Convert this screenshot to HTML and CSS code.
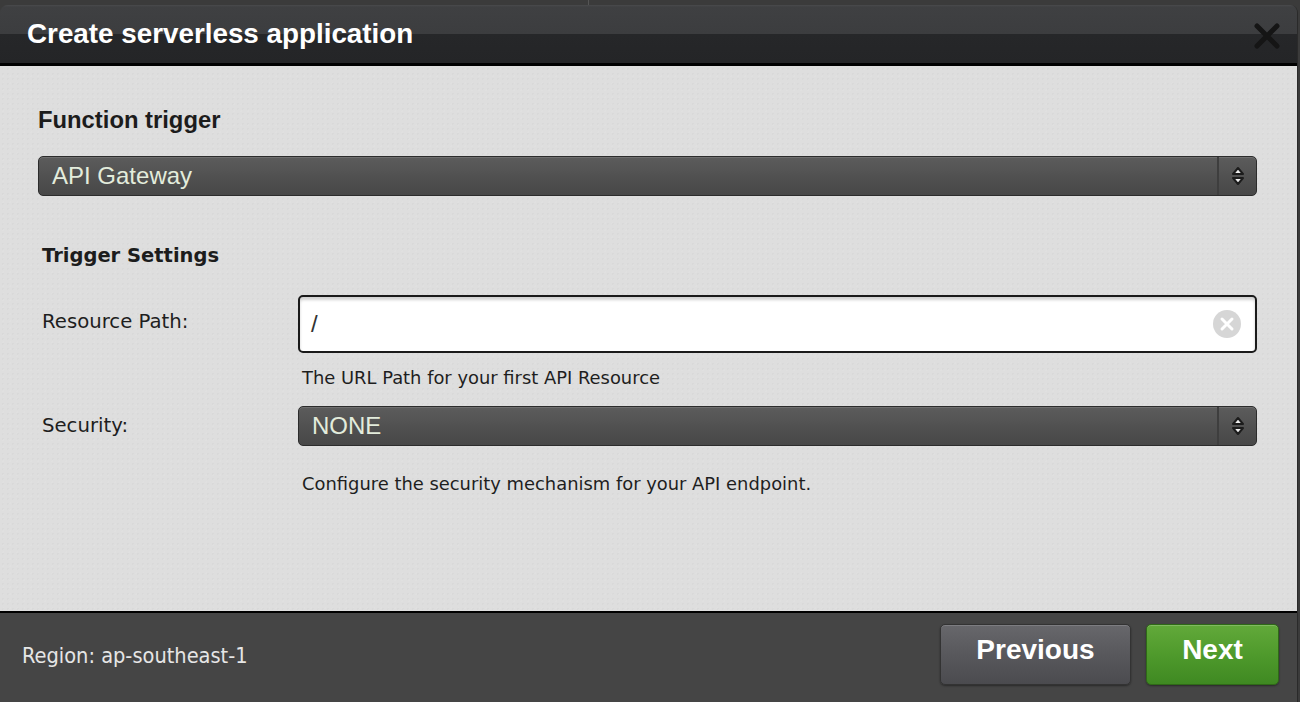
FILE: index.html
```html
<!DOCTYPE html>
<html>
<head>
<meta charset="utf-8">
<link rel="stylesheet" href="styles.css">
</head>
<body>
<div class="backdrop">
  <div class="modal">
    <div class="modal-header">
      <h1 class="modal-title">Create serverless application</h1>
      <button class="close-btn" aria-label="Close">
        <svg width="28" height="28" viewBox="0 0 28 28"><path d="M4 4 L24 24 M24 4 L4 24" stroke="#151515" stroke-width="5" stroke-linecap="round"/></svg>
      </button>
    </div>
    <div class="modal-body">
      <h2 class="section-title">Function trigger</h2>
      <div class="select select-full">
        <span class="select-value">API Gateway</span>
        <span class="select-arrows">
          <svg width="14" height="24" viewBox="0 0 14 24"><path d="M2 10 L7 4 L12 10 Z" fill="#eee" stroke="#1c1c1c" stroke-width="2" stroke-linejoin="round"/><path d="M2 14 L7 20 L12 14 Z" fill="#eee" stroke="#1c1c1c" stroke-width="2" stroke-linejoin="round"/></svg>
        </span>
      </div>
      <h3 class="settings-title">Trigger Settings</h3>
      <div class="form-grid">
        <label class="field-label label-path">Resource Path:</label>
        <div class="field">
          <div class="text-input">
            <span class="input-value">/</span>
            <span class="clear-icon">
              <svg width="28" height="28" viewBox="0 0 28 28"><circle cx="14" cy="14" r="14" fill="#d6d6d6"/><path d="M9 9 L19 19 M19 9 L9 19" stroke="#fff" stroke-width="3" stroke-linecap="round"/></svg>
            </span>
          </div>
          <p class="help help-path">The URL Path for your first API Resource</p>
        </div>
        <label class="field-label label-security">Security:</label>
        <div class="field">
          <div class="select">
            <span class="select-value">NONE</span>
            <span class="select-arrows">
              <svg width="14" height="24" viewBox="0 0 14 24"><path d="M2 10 L7 4 L12 10 Z" fill="#eee" stroke="#1c1c1c" stroke-width="2" stroke-linejoin="round"/><path d="M2 14 L7 20 L12 14 Z" fill="#eee" stroke="#1c1c1c" stroke-width="2" stroke-linejoin="round"/></svg>
            </span>
          </div>
          <p class="help help-security">Configure the security mechanism for your API endpoint.</p>
        </div>
      </div>
    </div>
    <div class="modal-footer">
      <span class="region">Region: ap-southeast-1</span>
      <div class="actions">
        <button class="btn btn-prev">Previous</button>
        <button class="btn btn-next">Next</button>
      </div>
    </div>
  </div>
</div>
</body>
</html>
```

FILE: styles.css
```css
* { box-sizing: border-box; }
html, body { margin: 0; padding: 0; }
body {
  background: #3a3a3a;
  width: 1300px;
  height: 702px;
  overflow: hidden;
}
.backdrop {
  padding-top: 5px;
  background: linear-gradient(to right, #3b3b3b 0, #3b3b3b 588px, #555 588px, #555 589px, #3b3b3b 589px);
  height: 702px;
}
.modal {
  width: 1298px;
  height: 697px;
  display: flex;
  flex-direction: column;
  border-radius: 8px 8px 0 0;
  overflow: hidden;
  border-right: 1px solid #2a2a2a;
}
.modal-header {
  height: 61px;
  flex: none;
  background: linear-gradient(to bottom, #4a4b4d 0, #3f4042 2px, #3c3d3f 29px, #262729 29px, #242527 58px);
  border-bottom: 3px solid #000;
  display: flex;
  align-items: center;
  justify-content: space-between;
  padding: 0 16px 0 27px;
}
.modal-title {
  margin: 0;
  font-family: "Liberation Sans", Arial, sans-serif;
  font-weight: bold;
  font-size: 27.8px;
  color: #fff;
}
.close-btn {
  background: none;
  border: 0;
  padding: 0;
  width: 28px;
  height: 28px;
  margin-top: 4px;
}
.modal-body {
  flex: 1;
  background-color: #dedede;
  background-image:
    radial-gradient(rgba(0,0,0,0.025) 1px, transparent 1px),
    radial-gradient(rgba(255,255,255,0.05) 1px, transparent 1px);
  background-size: 5px 5px, 7px 7px;
  padding: 40px 40px 0 38px;
  border-bottom: 2px solid #000;
}
.section-title {
  margin: 0 0 21.5px 0;
  font-family: "Liberation Sans", Arial, sans-serif;
  font-weight: bold;
  font-size: 23.8px;
  color: #1c1c1c;
}
.select {
  height: 40px;
  border: 1px solid #2c2c2c;
  border-radius: 5px;
  background: linear-gradient(to bottom, #5c5c5c 0, #515151 50%, #474747 100%);
  box-shadow: inset 0 1px 0 rgba(255,255,255,0.12);
  display: flex;
  align-items: center;
  justify-content: space-between;
}
.select-value {
  font-family: "Liberation Sans", Arial, sans-serif;
  font-size: 24px;
  color: #e3ecdc;
  padding-left: 13px;
}
.select-arrows {
  width: 39px;
  height: 100%;
  border-left: 2px solid #3e3e3e;
  display: flex;
  align-items: center;
  justify-content: center;
}
.settings-title {
  margin: 48px 0 0 4px;
  font-family: "DejaVu Sans", Verdana, sans-serif;
  font-weight: bold;
  font-size: 19.5px;
  color: #1c1c1c;
}
.form-grid {
  display: grid;
  grid-template-columns: 260px 1fr;
  margin-top: 28px;
}
.field-label {
  font-family: "DejaVu Sans", Verdana, sans-serif;
  font-size: 19.7px;
  color: #1e1e1e;
  padding-left: 4px;
}
.label-path { padding-top: 15px; }
.label-security { padding-top: 8px; }
.text-input {
  height: 58px;
  background: #fff;
  border: 2px solid #1a1a1a;
  border-radius: 5px;
  box-shadow: inset 0 3px 3px rgba(0,0,0,0.18);
  display: flex;
  align-items: center;
  justify-content: space-between;
  padding: 0 14px 0 11px;
}
.input-value {
  font-family: "Liberation Sans", Arial, sans-serif;
  font-size: 24px;
  color: #333;
}
.clear-icon { display: flex; }
.help {
  margin: 0;
  font-family: "DejaVu Sans", Verdana, sans-serif;
  font-size: 17.9px;
  color: #1e1e1e;
  padding-left: 4px;
}
.help-path { margin: 14px 0 18px 0; }
.help-security { margin: 27px 0 0 0; }
.modal-footer {
  height: 89px;
  flex: none;
  background: #454545;
  display: flex;
  align-items: center;
  justify-content: space-between;
  padding: 0 18px 0 22px;
}
.region {
  font-family: "DejaVu Sans Condensed", "DejaVu Sans", sans-serif;
  font-size: 21.6px;
  color: #e6e6e6;
  margin-top: -5px;
}
.actions {
  display: flex;
  gap: 15px;
  margin-top: -6px;
}
.btn {
  height: 61px;
  border-radius: 5px;
  font-family: "Liberation Sans", Arial, sans-serif;
  font-weight: bold;
  font-size: 28px;
  color: #fff;
  padding-bottom: 10px;
  cursor: pointer;
}
.btn-prev {
  width: 191px;
  border: 1px solid #333;
  background: linear-gradient(to bottom, #67676b 0, #58585c 50%, #4b4b4f 100%);
  box-shadow: inset 0 1px 0 rgba(255,255,255,0.15), 0 1px 2px rgba(0,0,0,0.4);
}
.btn-next {
  width: 133px;
  border: 1px solid #2f6a17;
  background: linear-gradient(to bottom, #62a93a 0, #4f9a2c 50%, #3f8922 100%);
  box-shadow: inset 0 1px 0 rgba(255,255,255,0.2), 0 1px 2px rgba(0,0,0,0.4);
}
```
